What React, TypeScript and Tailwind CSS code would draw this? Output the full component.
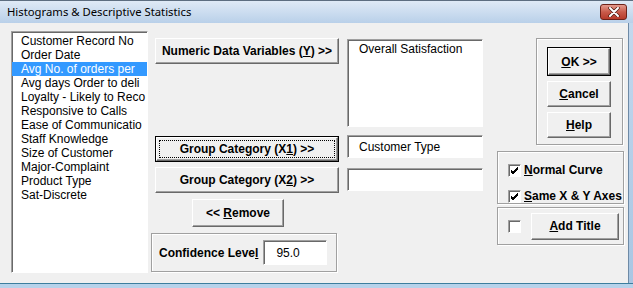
const listItems = [
  'Customer Record No',
  'Order Date',
  'Avg No. of orders per',
  'Avg days Order to deli',
  'Loyalty - Likely to Reco',
  'Responsive to Calls',
  'Ease of Communicatio',
  'Staff Knowledge',
  'Size of Customer',
  'Major-Complaint',
  'Product Type',
  'Sat-Discrete',
]

const raised =
  'border border-t-white border-l-white border-r-[#696969] border-b-[#696969] shadow-[inset_-1px_-1px_0_#a0a0a0] bg-[#f0f0f0]'
const sunken =
  'border border-t-[#a0a0a0] border-l-[#a0a0a0] border-r-white border-b-white shadow-[inset_1px_1px_0_#696969] bg-white'
const frame = 'border border-[#a0a0a0] shadow-[inset_1px_1px_0_#fff,1px_1px_0_#fff]'

function Btn({ children, className = '', focused = false, dflt = false }: { children: React.ReactNode; className?: string; focused?: boolean; dflt?: boolean }) {
  if (focused || dflt) {
    return (
      <div className={`border border-black ${className}`}>
        <div className={`${raised} h-full w-full p-[2px]`}>
          <div className={`h-full w-full flex items-center justify-center font-bold text-[12px] ${focused ? 'border border-dotted border-black' : ''}`}>
            {children}
          </div>
        </div>
      </div>
    )
  }
  return (
    <div className={`${raised} flex items-center justify-center font-bold text-[12px] ${className}`}>{children}</div>
  )
}

function Check({ checked }: { checked: boolean }) {
  return (
    <span className={`${sunken} w-[13px] h-[13px] flex items-center justify-center shrink-0`}>
      {checked && (
        <svg width="9" height="9" viewBox="0 0 9 9">
          <path d="M1 4 L3 6 L8 1 M1 5 L3 7 L8 2 M1 6 L3 8 L8 3" stroke="#000" strokeWidth="1" fill="none" />
        </svg>
      )}
    </span>
  )
}

export default function App() {
  return (
    <div className="w-[633px] h-[288px] flex flex-col bg-[#bcd4ec] text-black" style={{ fontFamily: '"Liberation Sans", Arial, sans-serif' }}>
      {/* title bar */}
      <div className="h-[23px] flex items-center justify-between bg-gradient-to-b from-[#dfeaf6] to-[#b9d0e9] border-t border-[#5d6e80] pl-[7px] pr-[6px]">
        <span className="text-[11.3px] text-black" style={{ fontFamily: '"Noto Sans", "Open Sans", sans-serif' }}>
          Histograms &amp; Descriptive Statistics
        </span>
        <div className="w-[27px] h-[16px] rounded-[3px] border border-[#6d2219] bg-gradient-to-b from-[#e49a8e] via-[#c95a4a] to-[#b73a2a] flex items-center justify-center">
          <svg width="12" height="10" viewBox="0 0 12 10">
            <path d="M2 1 L10 9 M10 1 L2 9" stroke="#4a1a12" strokeWidth="3.4" strokeLinecap="round" />
            <path d="M2 1 L10 9 M10 1 L2 9" stroke="#fff" strokeWidth="2" strokeLinecap="round" />
          </svg>
        </div>
      </div>

      <div className="flex flex-1">
        {/* body */}
        <div className="flex-1 flex bg-[#f0f0f0] pl-[11px] border-r border-[#6e8aa6]">
          {/* variable list */}
          <div className={`${sunken} mt-[8px] w-[137px] h-[242px] pt-[2px] overflow-hidden`}>
            {listItems.map((it, i) => (
              <div
                key={it}
                className={`h-[14px] leading-[14px] text-[12px] pl-[9px] whitespace-nowrap overflow-hidden ${i === 2 ? 'bg-[#3399ff] text-white' : ''}`}
              >
                {it}
              </div>
            ))}
          </div>

          {/* buttons */}
          <div className="ml-[3px] w-[187px] flex flex-col">
            <Btn className="mt-[15px] ml-[4px] w-[184px] h-[26px]">
              <span>Numeric Data Variables (<u>Y</u>) &gt;&gt;</span>
            </Btn>
            <Btn focused className="mt-[72px] ml-[4px] w-[184px] h-[26px]">
              <span>Group Category (X<u>1</u>) &gt;&gt;</span>
            </Btn>
            <Btn className="mt-[5px] ml-[4px] w-[184px] h-[26px]">
              <span>Group Category (X<u>2</u>) &gt;&gt;</span>
            </Btn>
            <Btn className="mt-[6px] ml-[41px] w-[92px] h-[28px]">
              <span>&lt;&lt; <u>R</u>emove</span>
            </Btn>
            <div className={`${frame} mt-[6px] w-[186px] h-[39px] flex items-center pl-[7px]`}>
              <span className="font-bold text-[12px]">Confidence Leve<u>l</u></span>
              <div className={`${sunken} ml-[5px] w-[64px] h-[25px] text-[12px] flex items-center pl-[12px]`}>95.0</div>
            </div>
          </div>

          {/* selected boxes */}
          <div className="ml-[9px] w-[136px] flex flex-col">
            <div className={`${sunken} mt-[16px] h-[88px] text-[12px] pl-[11px] pt-[1px] leading-[16px]`}>Overall Satisfaction</div>
            <div className={`${sunken} mt-[8px] h-[23px] text-[12px] pl-[11px] flex items-center`}>Customer Type</div>
            <div className={`${sunken} mt-[10px] h-[23px]`} />
          </div>

          {/* right options */}
          <div className="ml-[14px] w-[127px] flex flex-col">
            <div className={`${frame} mt-[15px] ml-[39px] w-[87px] h-[107px] flex flex-col items-center pt-[8px] pr-[1px]`}>
              <Btn dflt className="w-[64px] h-[29px]">
                <span><u>O</u>K &gt;&gt;</span>
              </Btn>
              <Btn className="mt-[5px] w-[64px] h-[26px]">
                <span><u>C</u>ancel</span>
              </Btn>
              <Btn className="mt-[5px] w-[64px] h-[26px]">
                <span><u>H</u>elp</span>
              </Btn>
            </div>
            <div className={`${frame} mt-[6px] w-[127px] h-[53px] flex flex-col pl-[10px] pt-[9px] gap-[8px]`}>
              <div className="flex items-center gap-[3px] font-bold text-[12px]">
                <Check checked />
                <span><u>N</u>ormal Curve</span>
              </div>
              <div className="flex items-center gap-[3px] font-bold text-[12px]">
                <Check checked />
                <span><u>S</u>ame X &amp; Y Axes</span>
              </div>
            </div>
            <div className={`${frame} mt-[3px] w-[127px] h-[38px] flex items-center pl-[10px]`}>
              <Check checked={false} />
              <Btn className="ml-[10px] w-[88px] h-[27px]">
                <span><u>A</u>dd Title</span>
              </Btn>
            </div>
          </div>
        </div>
        {/* right window frame */}
        <div className="w-[4px] bg-gradient-to-b from-[#c3d8ee] to-[#a9c6e3]" />
      </div>
      {/* bottom window frame */}
      <div className="h-[5px] border-t border-[#3c7e9e] bg-[#b7d2ea]" />
    </div>
  )
}
